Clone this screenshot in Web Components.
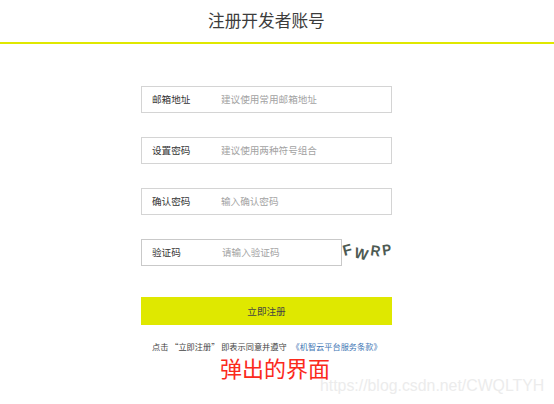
<!DOCTYPE html>
<html lang="zh"><head><meta charset="utf-8"><title>注册开发者账号</title>
<style>
html,body{margin:0;padding:0;background:#fff;overflow:hidden}
body{width:554px;height:404px;position:relative;font-family:"Liberation Sans","Noto Sans CJK SC",sans-serif}
</style></head><body>
<reg-page></reg-page>
<template id="t-page"><style>
:host{display:block;width:554px;height:404px}
header{height:42px;border-bottom:2px solid #dfe800;padding-left:208px}
h1{margin:0;font:400 16.7px/41px "Noto Sans CJK SC",sans-serif;color:#3c3c3c}
main{width:251px;margin:42px 0 0 141px;display:flex;flex-direction:column;gap:24px}
.cap{display:flex;align-items:flex-start}
.cap reg-field{flex:none;width:201px}
.btn{margin-top:7px}
.note{margin:15px 0 0 152px;font:400 8.2px/12px "Noto Sans CJK SC",sans-serif;color:#444;white-space:nowrap}
.note a{color:#3f77b5;text-decoration:none;margin-left:3px}
.big{margin-top:0;padding-left:220px;font:400 22px/30px "Noto Sans CJK SC",sans-serif;color:#fb2a1c;white-space:nowrap}
.wm{position:absolute;left:320px;top:376px;font:400 15.85px/20px "Liberation Sans",sans-serif;color:#ececec;white-space:nowrap}
</style>
<header><h1>注册开发者账号</h1></header>
<main>
<reg-field label="邮箱地址" hint="建议使用常用邮箱地址"></reg-field>
<reg-field label="设置密码" hint="建议使用两种符号组合"></reg-field>
<reg-field label="确认密码" hint="输入确认密码"></reg-field>
<div class="cap"><reg-field label="验证码" hint="请输入验证码" dark></reg-field><reg-captcha></reg-captcha></div>
<reg-button class="btn">立即注册</reg-button>
</main>
<div class="note">点击 “立即注册” 即表示同意并遵守 <a>《机智云平台服务条款》</a></div>
<div class="big">弹出的界面</div>
<div class="wm">https://blog.csdn.net/CWQLTYH</div>
</template>
<template id="t-field"><style>
:host{display:block;height:27px}
.box{box-sizing:border-box;height:100%;border:1px solid #d4d4d4;display:flex;align-items:center;padding-left:10px;font:400 9.6px/1 "Noto Sans CJK SC",sans-serif}
.l{width:69px;color:#333;flex:none}
.h{color:#a3a3a3}
:host([dark]) .box{border-color:#c9c9c9}
:host([dark]) .l{width:70px}
</style><div class="box"><span class="l"></span><span class="h"></span></div></template>
<template id="t-cap"><style>
:host{display:flex;height:22px;margin:1px 0 0 1px;gap:1px;font:700 15px/20px "Liberation Sans",sans-serif;color:#4d5a52;align-items:center}
span{display:inline-block}
</style><span style="transform:rotate(-15deg) translateY(-1px);margin-right:2px">F</span><span style="transform:rotate(14deg) translateY(3px) scaleX(.95)">W</span><span style="transform:rotate(8deg) scaleX(.9)">R</span><span style="transform:rotate(-8deg) translateY(-1px) scaleX(.9)">P</span></template>
<template id="t-btn"><style>
:host{display:block}
button{display:block;width:100%;height:28px;border:0;padding:0;background:#dfe800;color:#444;font:400 9.6px/28px "Noto Sans CJK SC",sans-serif}
</style><button><slot></slot></button></template>
<script>
const mk=(name,id,init)=>customElements.define(name,class extends HTMLElement{
  constructor(){super();this.attachShadow({mode:'open'}).appendChild(document.getElementById(id).content.cloneNode(true));}
  connectedCallback(){init&&init(this);}
});
mk('reg-page','t-page');
mk('reg-field','t-field',e=>{e.shadowRoot.querySelector('.l').textContent=e.getAttribute('label');e.shadowRoot.querySelector('.h').textContent=e.getAttribute('hint');});
mk('reg-captcha','t-cap');
mk('reg-button','t-btn');
</script>
</body></html>
